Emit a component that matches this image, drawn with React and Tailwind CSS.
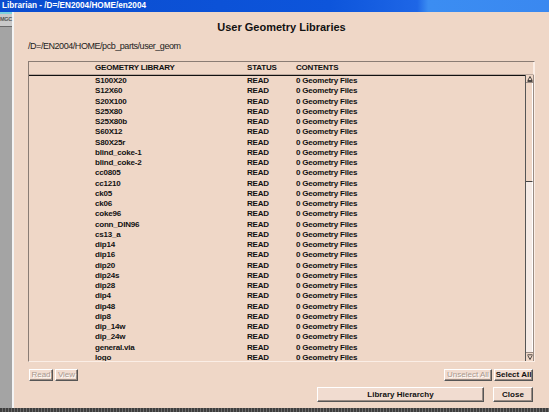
import React from "react";

const rows = [
  "S100X20","S12X60","S20X100","S25X80","S25X80b","S60X12","S80X25r",
  "blind_coke-1","blind_coke-2","cc0805","cc1210","ck05","ck06","coke96",
  "conn_DIN96","cs13_a","dip14","dip16","dip20","dip24s","dip28","dip4",
  "dip48","dip8","dip_14w","dip_24w","general.via","logo",
];

function Btn({ children, className = "", disabled = false, bold = false }) {
  return (
    <div
      className={
        "flex items-center justify-center bg-[#f1dcd0] border border-t-white border-l-white border-b-[#555] border-r-[#555] shadow-[inset_-1px_-1px_0_#9a8c84] leading-none " +
        (disabled
          ? "text-[#a8988e] [text-shadow:1px_1px_0_#fff] font-normal "
          : "text-[#111] ") +
        (bold ? "font-bold " : "") +
        className
      }
    >
      {children}
    </div>
  );
}

export default function App() {
  return (
    <div className="w-[549px] h-[412px] overflow-hidden flex flex-col bg-[#a4a4a4] font-['Liberation_Sans',Arial,sans-serif]">
      {/* title bar */}
      <div className="h-[12px] shrink-0 flex items-center pl-[2px] bg-[linear-gradient(90deg,#0a4ccf_0%,#0d55db_60%,#1e66e6_76%,#3b8df2_78%,#3a88f0_100%)]">
        <span className="text-white font-bold text-[8.2px] leading-none">
          Librarian - /D=/EN2004/HOME/en2004
        </span>
      </div>

      <div className="flex-1 flex min-h-0">
        {/* left strip */}
        <div className="w-[14px] shrink-0 flex flex-col border-r-2 border-r-[#f4f4f4]">
          <div className="h-[2px] bg-[#7ed2dc]" />
          <div className="h-[13px] bg-[#c9c9c9] border-b border-b-[#6a6a6a] flex items-center">
            <span className="text-[5.5px] font-bold text-[#555] leading-none tracking-[-0.3px]">MGC</span>
          </div>
          <div className="flex-1 bg-[#a4a4a4]" />
        </div>

        {/* dialog */}
        <div className="flex-1 bg-[#efd7c7] flex flex-col pl-[14px] pr-[14px] pt-[9px]">
          <div className="text-center font-bold text-[11px] leading-[13px] text-[#111]">
            User Geometry Libraries
          </div>
          <div className="mt-[6px] text-[9px] leading-[12px] tracking-[-0.45px] text-[#222]">
            /D=/EN2004/HOME/pcb_parts/user_geom
          </div>

          {/* table */}
          <div className="mt-[9px] h-[301px] flex flex-col border border-t-[#8a7c74] border-l-[#8a7c74] border-r-[#fbeee6] border-b-[#fbeee6] text-[8px] tracking-[-0.2px] font-bold text-[#111]">
            <div className="h-[13px] shrink-0 flex items-center border-b border-b-[#bca99e] border-r border-r-[#fbeee6]">
              <div className="pl-[66px] w-[218px]">GEOMETRY LIBRARY</div>
              <div className="w-[49px]">STATUS</div>
              <div>CONTENTS</div>
            </div>
            <div className="flex-1 flex min-h-0">
              <div className="flex-1 flex flex-col border-t border-t-[#111] overflow-hidden">
                {rows.map((r) => (
                  <div key={r} className="h-[10.26px] shrink-0 flex items-center leading-none">
                    <div className="pl-[66px] w-[218px]">{r}</div>
                    <div className="w-[49px]">READ</div>
                    <div>0 Geometry Files</div>
                  </div>
                ))}
              </div>
              {/* scrollbar */}
              <div className="w-[9px] shrink-0 flex flex-col border-l border-l-[#555] border-r border-r-[#9a8c84] bg-[#f6ece6]">
                <div className="h-[8px] flex items-center justify-center bg-[#efd7c7] border-b border-b-[#9a8c84]">
                  <svg width="6" height="6" viewBox="0 0 6 6">
                    <path d="M3 0.5 L0.8 4.5 L5.2 4.5 Z" fill="none" stroke="#222" strokeWidth="0.8" />
                    <path d="M0.5 5.5 H5.5" stroke="#222" strokeWidth="0.8" />
                  </svg>
                </div>
                <div className="h-[99px] bg-[#efd7c7] border-b border-b-[#444] border-r border-r-[#fff]" />
                <div className="flex-1 bg-[#f5ebe6] border-r border-r-[#fff]" />
                <div className="h-[9px] flex items-center justify-center bg-[#efd7c7] border-t border-t-[#9a8c84]">
                  <svg width="6" height="6" viewBox="0 0 6 6">
                    <path d="M0.5 0.8 H5.5" stroke="#222" strokeWidth="0.8" />
                    <path d="M0.8 1.5 L3 5.5 L5.2 1.5" fill="none" stroke="#222" strokeWidth="0.8" />
                  </svg>
                </div>
              </div>
            </div>
          </div>

          {/* buttons row 1 */}
          <div className="mt-[7px] mr-[2px] h-[12px] flex justify-between text-[8px]">
            <div className="flex gap-[2px] pl-[1px]">
              <Btn disabled className="w-[24px]">Read</Btn>
              <Btn disabled className="w-[23px]">View</Btn>
            </div>
            <div className="flex gap-[2px]">
              <Btn disabled className="w-[48px]">Unselect All</Btn>
              <Btn bold className="w-[39px]">Select All</Btn>
            </div>
          </div>

          {/* buttons row 2 */}
          <div className="mt-[6px] mr-[2px] h-[15px] flex justify-end gap-[9px] text-[8px]">
            <Btn bold className="w-[167px]">Library Hierarchy</Btn>
            <Btn bold className="w-[40px]">Close</Btn>
          </div>
        </div>
      </div>

      {/* bottom band */}
      <div className="h-[4px] shrink-0 bg-[repeating-linear-gradient(90deg,#3e3e3e_0px,#3e3e3e_2px,#6a6a6a_2px,#6a6a6a_3px)]" />
    </div>
  );
}
